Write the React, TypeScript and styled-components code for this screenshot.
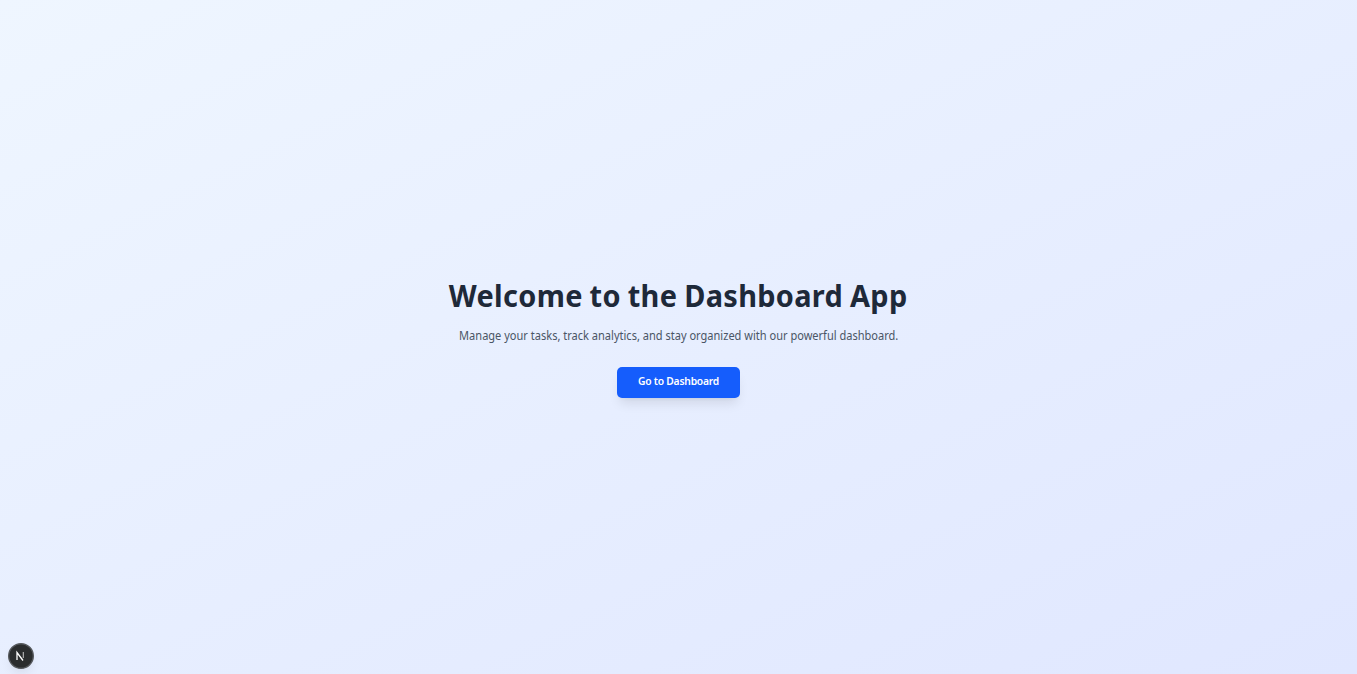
import React from "react";
import styled, { createGlobalStyle } from "styled-components";

const GlobalStyle = createGlobalStyle`
  *, *::before, *::after { box-sizing: border-box; }
  body { margin: 0; font-family: "Noto Sans", "Open Sans", sans-serif; }
`;

const Page = styled.main`
  display: flex;
  flex-direction: column;
  align-items: center;
  justify-content: center;
  min-height: 100vh;
  background: linear-gradient(to bottom right in oklab, #eff6ff, #e0e7ff);
`;

const Content = styled.div`
  display: flex;
  flex-direction: column;
  align-items: center;
  padding-top: 4px;
  text-align: center;
  white-space: nowrap;
`;

const Title = styled.h1`
  margin: 0 0 17px;
  font-size: 30.5px;
  line-height: 31px;
  font-weight: 660;
  letter-spacing: 0.35px;
  word-spacing: -1px;
  color: #1e2939;
  transform: scaleX(0.947);
`;

const Description = styled.p`
  margin: 0 0 23px;
  font-size: 12px;
  line-height: 16px;
  color: #4a5565;
  transform: scaleX(0.92);
`;

const PrimaryButton = styled.button`
  width: 123px;
  height: 31px;
  padding: 0 0 3px;
  border: 0;
  border-radius: 5px;
  background: #155dfc;
  color: #fff;
  font-family: inherit;
  font-size: 10.3px;
  letter-spacing: -0.22px;
  font-weight: 600;
  box-shadow: 0 8px 12px -3px rgba(0, 0, 0, 0.1), 0 3px 5px -4px rgba(0, 0, 0, 0.1);
`;

const DevBadge = styled.div`
  position: fixed;
  left: 8px;
  bottom: 5px;
  width: 26px;
  height: 26px;
  border-radius: 50%;
  box-shadow: 0 6px 12px -3px rgba(0, 0, 0, 0.1);
`;

export default function App() {
  return (
    <>
      <GlobalStyle />
      <Page>
        <Content>
          <Title>Welcome to the Dashboard App</Title>
          <Description>
            Manage your tasks, track analytics, and stay organized with our powerful dashboard.
          </Description>
          <PrimaryButton>Go to Dashboard</PrimaryButton>
        </Content>
      </Page>
      <DevBadge>
        <svg width="26" height="26" viewBox="0 0 26 26" fill="none">
          <circle cx="13" cy="13" r="12.3" fill="#2b2d2e" stroke="#55585c" strokeWidth="1.4" />
          <path d="M9 17V9.5L15 17.5" stroke="#fff" strokeWidth="1.3" />
          <path d="M15.3 9V15" stroke="#bbb" strokeWidth="1.1" />
        </svg>
      </DevBadge>
    </>
  );
}
